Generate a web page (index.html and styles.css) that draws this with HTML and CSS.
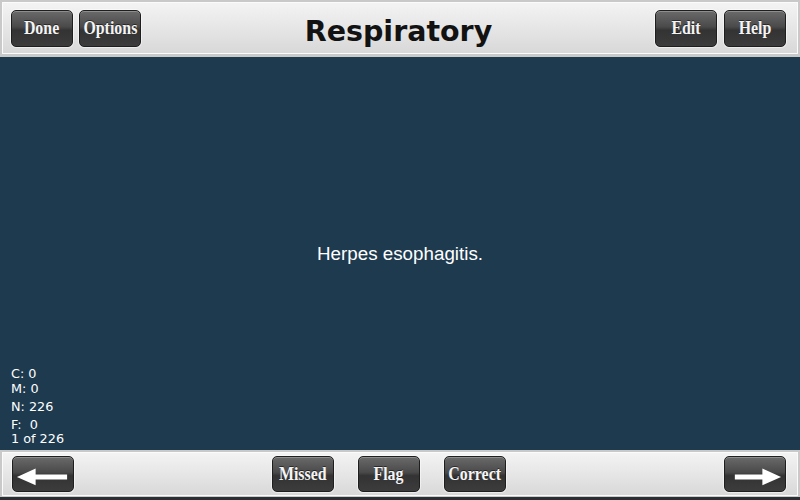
FILE: index.html
```html
<!DOCTYPE html>
<html>
<head>
<meta charset="utf-8">
<link rel="stylesheet" href="styles.css">
</head>
<body>
<div class="app">
  <header class="topbar">
    <div class="bar-inner">
      <div class="group left">
        <button class="btn"><span>Done</span></button>
        <button class="btn"><span>Options</span></button>
      </div>
      <h1 class="title">Respiratory</h1>
      <div class="group right">
        <button class="btn"><span>Edit</span></button>
        <button class="btn"><span>Help</span></button>
      </div>
    </div>
  </header>
  <main class="card">
    <p class="message">Herpes esophagitis.</p>
    <div class="stats">
      <div class="stat s-c">C: 0</div>
      <div class="stat s-m">M: 0</div>
      <div class="stat s-n">N: 226</div>
      <div class="stat s-f">F:  0</div>
      <div class="stat s-p">1 of 226</div>
    </div>
  </main>
  <footer class="bottombar">
    <div class="bar-inner foot">
      <div class="group left">
        <button class="btn arrow" aria-label="Previous">
          <svg width="61" height="36" viewBox="0 0 61 36"><polygon points="4,21 23,12.5 23,18.5 55,18.5 55,23.5 23,23.5 23,29.5" fill="#fff"/></svg>
        </button>
      </div>
      <div class="group center">
        <button class="btn"><span>Missed</span></button>
        <button class="btn"><span>Flag</span></button>
        <button class="btn"><span>Correct</span></button>
      </div>
      <div class="group right">
        <button class="btn arrow" aria-label="Next">
          <svg width="61" height="36" viewBox="0 0 61 36"><polygon points="57,21 38,12.5 38,18.5 10,18.5 10,23.5 38,23.5 38,29.5" fill="#fff"/></svg>
        </button>
      </div>
    </div>
  </footer>
</div>
</body>
</html>
```
FILE: styles.css
```css
html, body {
  margin: 0;
  padding: 0;
  width: 800px;
  height: 500px;
  overflow: hidden;
  background: #1e3a4f;
}
.app {
  display: flex;
  flex-direction: column;
  width: 800px;
  height: 500px;
}
.topbar {
  height: 57px;
  box-sizing: border-box;
  background: #c9c9c9;
  padding: 2px 2px 3px 2px;
  flex: none;
}
.bottombar {
  height: 50px;
  box-sizing: border-box;
  background: #c9c9c9;
  padding: 2px 2px 1px 2px;
  border-bottom: 3px solid #2a2f33;
  flex: none;
}
.bar-inner {
  height: 100%;
  box-sizing: border-box;
  border: 1px solid #fbfbfb;
  background: linear-gradient(#f3f3f3, #e6e6e6 50%, #d8d8d8);
  display: grid;
  grid-template-columns: 1fr auto 1fr;
  align-items: center;
  padding: 0 11px 0 8px;
}
.foot {
  padding: 0 11px 0 9px;
}
.group {
  display: flex;
  align-items: center;
  gap: 6px;
}
.group.right {
  justify-self: end;
  gap: 7px;
}
.group.center {
  gap: 24px;
  margin-right: 21px;
}
.title {
  margin: 0;
  font-family: "DejaVu Sans", sans-serif;
  font-weight: bold;
  font-size: 28.5px;
  color: #121212;
  letter-spacing: 0;
  line-height: 1;
  padding-top: 8px;
}
.btn {
  width: 62px;
  height: 37px;
  box-sizing: border-box;
  margin: 0;
  padding: 0;
  border: 1px solid #1e1e1e;
  border-radius: 5px;
  background: linear-gradient(#6a6a6a 0%, #4a4a4a 45%, #333 55%, #3c3c3c 100%);
  box-shadow: inset 0 1px 0 rgba(255,255,255,0.25), 0 0 0 1px rgba(255,255,255,0.5);
  color: #f4f4f4;
  font-family: "Liberation Serif", serif;
  font-weight: bold;
  font-size: 18.5px;
  display: flex;
  align-items: center;
  justify-content: center;
}
.btn span {
  display: inline-block;
  transform: scaleX(0.86);
  text-shadow: 0 -1px 0 rgba(0,0,0,0.5);
  white-space: nowrap;
}
.foot .btn {
  height: 36px;
}
.btn.arrow svg {
  display: block;
}
.card {
  flex: 1;
  display: grid;
  min-height: 0;
}
.message {
  grid-area: 1 / 1;
  align-self: center;
  justify-self: center;
  margin: 0;
  font-family: "Liberation Sans", Arial, sans-serif;
  font-size: 18.8px;
  color: #fff;
}
.stats {
  grid-area: 1 / 1;
  align-self: end;
  justify-self: start;
  padding: 0 0 4px 11px;
  font-family: "DejaVu Sans", sans-serif;
  font-size: 12.8px;
  color: #fff;
}
.stat {
  white-space: pre;
  line-height: 15px;
}
.s-n, .s-f {
  margin-top: 3px;
}
.s-p {
  margin-top: -1px;
}
```
